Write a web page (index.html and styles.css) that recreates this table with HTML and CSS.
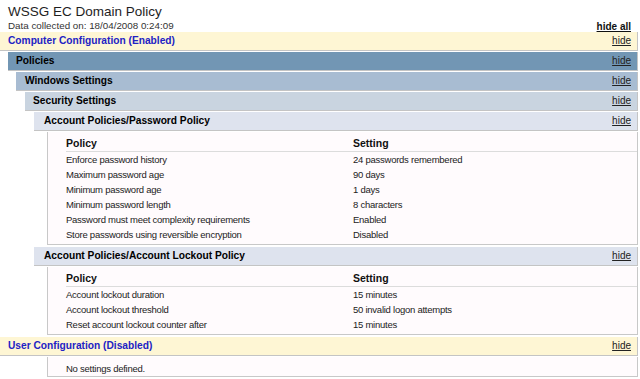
FILE: index.html
```html
<!DOCTYPE html>
<html>
<head>
<meta charset="utf-8">
<title>WSSG EC Domain Policy</title>
<link rel="stylesheet" href="styles.css">
</head>
<body>
<div class="page">
  <div class="head">
    <div class="title">WSSG EC Domain Policy</div>
    <div class="meta">
      <span>Data collected on: 18/04/2008 0:24:09</span>
      <a class="hideall">hide all</a>
    </div>
  </div>

  <div class="bar cfg"><span>Computer Configuration (Enabled)</span><a class="hide">hide</a></div>
  <div class="lvl1">
    <div class="bar pol"><span>Policies</span><a class="hide">hide</a></div>
    <div class="lvl2">
      <div class="bar win"><span>Windows Settings</span><a class="hide">hide</a></div>
      <div class="lvl3">
        <div class="bar sec"><span>Security Settings</span><a class="hide">hide</a></div>
        <div class="lvl4">
          <div class="bar acct"><span>Account Policies/Password Policy</span><a class="hide">hide</a></div>
          <div class="box">
            <div class="tbl">
              <div class="th">Policy</div><div class="th">Setting</div>
              <div class="td">Enforce password history</div><div class="td">24 passwords remembered</div>
              <div class="td">Maximum password age</div><div class="td">90 days</div>
              <div class="td">Minimum password age</div><div class="td">1 days</div>
              <div class="td">Minimum password length</div><div class="td">8 characters</div>
              <div class="td">Password must meet complexity requirements</div><div class="td">Enabled</div>
              <div class="td">Store passwords using reversible encryption</div><div class="td">Disabled</div>
            </div>
          </div>
          <div class="bar acct"><span>Account Policies/Account Lockout Policy</span><a class="hide">hide</a></div>
          <div class="box">
            <div class="tbl">
              <div class="th">Policy</div><div class="th">Setting</div>
              <div class="td">Account lockout duration</div><div class="td">15 minutes</div>
              <div class="td">Account lockout threshold</div><div class="td">50 invalid logon attempts</div>
              <div class="td">Reset account lockout counter after</div><div class="td">15 minutes</div>
            </div>
          </div>
        </div>
      </div>
    </div>
  </div>

  <div class="bar cfg user"><span>User Configuration (Disabled)</span><a class="hide">hide</a></div>
  <div class="box nodata">No settings defined.</div>
</div>
</body>
</html>
```
FILE: styles.css
```css
html, body {
  margin: 0;
  padding: 0;
  background: #ffffff;
}

body {
  font-family: "Liberation Sans", Arial, sans-serif;
  font-size: 10px;
  color: #222;
}

.page {
  width: 638px;
}

.head {
  padding: 4px 7px 0 8px;
}

.title {
  font-size: 13.5px;
  line-height: 16px;
  color: #1e1e1e;
}

.meta {
  display: flex;
  justify-content: space-between;
  align-items: flex-end;
  height: 12px;
  line-height: 12px;
  font-size: 9.8px;
  color: #333;
}

.hideall {
  font-weight: bold;
  text-decoration: underline;
  color: #111;
  font-size: 10px;
  position: relative;
  top: 1px;
}

.bar {
  display: flex;
  justify-content: space-between;
  align-items: center;
  height: 18px;
  line-height: 18px;
  padding: 0 6px 0 8px;
  border-bottom: 1px solid #c4c4c4;
  border-right: 1px solid #c4c4c4;
  margin-bottom: 1px;
  font-weight: bold;
  font-size: 10.2px;
  color: #000;
}

.hide {
  font-weight: normal;
  text-decoration: underline;
  color: #222;
  font-size: 10px;
}

.cfg {
  background: #fef6d4;
  color: #2222c4;
}

.pol { background: #7296b4; }
.win { background: #a8bcd2; padding-left: 9px; }
.sec { background: #c9d4e0; }
.acct { background: #dee3ee; padding-left: 10px; }

.lvl1 { margin-left: 8px; }
.lvl2 { margin-left: 8px; }
.lvl3 { margin-left: 9px; }
.lvl4 { margin-left: 9px; }

.box {
  margin-left: 13px;
  background: #fffbfd;
  border-left: 1px solid #c8c8c8;
  border-right: 1px solid #c8c8c8;
  border-bottom: 1px solid #c8c8c8;
  padding: 0 0 2px 18px;
  margin-bottom: 2px;
}

.tbl {
  display: grid;
  grid-template-columns: 287px 1fr;
}

.th {
  font-weight: bold;
  font-size: 10.5px;
  color: #111;
  height: 19px;
  line-height: 22px;
  border-bottom: 1px solid #dcdcdc;
}

.td {
  height: 15px;
  line-height: 15px;
  font-size: 9.5px;
  letter-spacing: -0.25px;
  color: #222;
}

.nodata {
  margin-left: 47px;
  height: 19px;
  line-height: 23px;
  padding-bottom: 0;
  font-size: 9.5px;
  letter-spacing: -0.25px;
}
```
